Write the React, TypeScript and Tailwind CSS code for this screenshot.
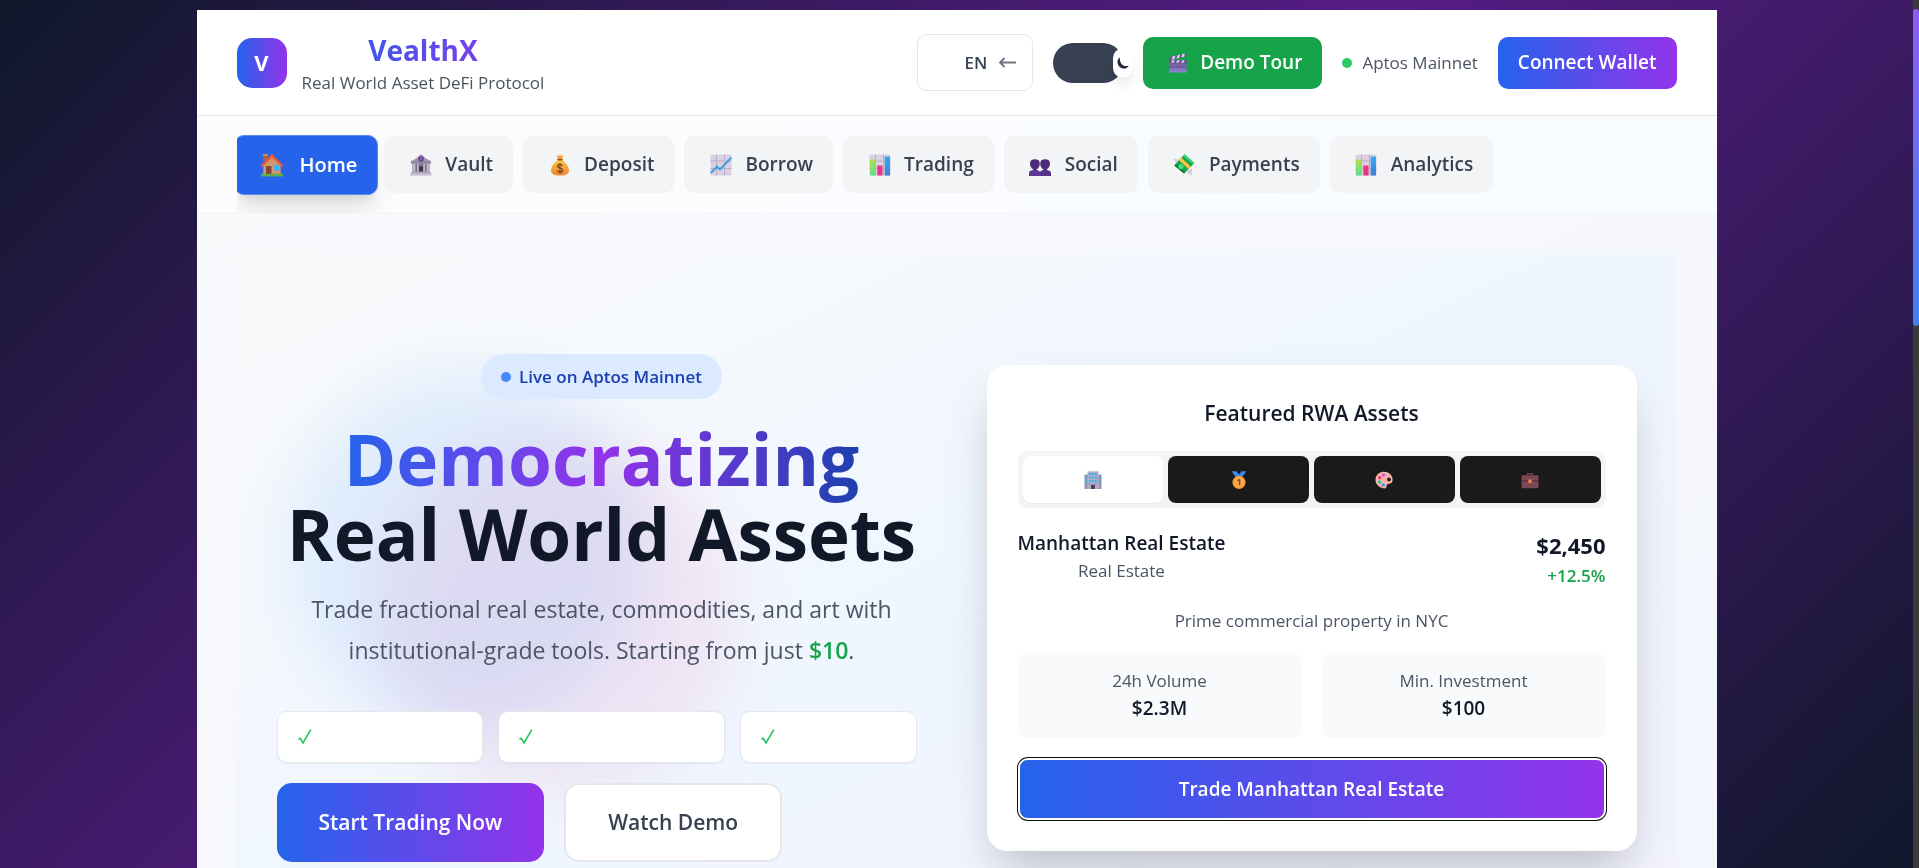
import React from "react";

type IconProps = { className?: string };

const House = ({ className }: IconProps) => (
  <svg viewBox="0 0 22 22" className={className} aria-hidden="true">
    <path d="M3 1h4v6H3z" fill="#b5603f" />
    <path d="M2.5 1h5v1.6h-5z" fill="#d98a5e" />
    <path d="M3 11 11 3l8 8v9H3z" fill="#cf9670" />
    <path d="M0.5 11.5 11 1l10.500 10.500-1.500 1.300L11 4 2 12.800z" fill="#f0562f" />
    <path d="M5.500 12h5v8h-5z" fill="#7d4533" />
    <path d="M13 11h5v5h-5z" fill="#35b4f4" />
    <path d="M1 19h20v2.500H1z" fill="#5fae4b" />
  </svg>
);

const Bank = ({ className }: IconProps) => (
  <svg viewBox="0 0 22 22" className={className} aria-hidden="true">
    <path d="M1 7 6 4.500 11 .3l5 4.200L21 7v2.500H1z" fill="#a196ae" />
    <path d="M1 7.500h20V9.500H1z" fill="#8d829c" />
    <circle cx="11" cy="5" r="2.700" fill="#5b3a8f" />
    <path d="M11 3.500v3" stroke="#b58be0" strokeWidth="1.200" />
    <path d="M2.500 9.500h17V18h-17z" fill="#7d7189" />
    <path d="M3 9.500h2.500V18H3zM7 9.500h1.800V18H7zM13.200 9.500H15V18h-1.800zM16.500 9.500H19V18h-2.500z" fill="#bdb4c8" />
    <path d="M9 12.500h4V18H9z" fill="#42374f" />
    <path d="M1.500 17.500h19V19h-19z" fill="#a99fb6" />
    <path d="M0.500 19h21v2.500h-21z" fill="#c4bccf" />
  </svg>
);

const MoneyBag = ({ className }: IconProps) => (
  <svg viewBox="0 0 22 22" className={className} aria-hidden="true">
    <defs>
      <linearGradient id="bag" x1="0" y1="0" x2="0" y2="1">
        <stop offset="0" stopColor="#fcc945" />
        <stop offset="1" stopColor="#f0832c" />
      </linearGradient>
    </defs>
    <path d="M7.500 1.800 9.500 2l1.500-1.700L12.500 2l2-.2-1.700 3.400H9.200z" fill="#f6a732" />
    <path d="M9 6c-3.500 2.500-7 6-7 10.500 0 3.500 3 5 9 5s9-1.500 9-5C20 12 16.500 8.500 13 6z" fill="url(#bag)" />
    <rect x="8.200" y="4.800" width="5.600" height="1.700" rx=".8" fill="#a25a2c" />
    <path d="M13.600 11.600c-.5-1-1.500-1.300-2.600-1.300-1.500 0-2.500.7-2.500 1.900 0 2.800 5.200 1.200 5.200 4 0 1.200-1.200 2-2.700 2s-2.500-.6-2.900-1.700M11 8.900v10.800" fill="none" stroke="#7a4322" strokeWidth="1.300" />
  </svg>
);

const ChartBase = () => (
  <>
    <rect x="0.500" y="0.500" width="21" height="21" rx="1.500" fill="#d9d1e2" />
    <path d="M6.500 .5v21M14.500 .5v21M.5 7h21M.5 14.500h21" stroke="#b9afc6" strokeWidth="1" />
  </>
);

const ChartUp = ({ className }: IconProps) => (
  <svg viewBox="0 0 22 22" className={className} aria-hidden="true">
    <ChartBase />
    <path d="m.8 19 6.200-6.500 3 3L21.500 3.500" fill="none" stroke="#3b9be6" strokeWidth="1.900" />
  </svg>
);

const BarChart = ({ className }: IconProps) => (
  <svg viewBox="0 0 22 22" className={className} aria-hidden="true">
    <defs>
      <linearGradient id="barGreen" x1="0" y1="0" x2="0" y2="1">
        <stop offset="0" stopColor="#b4e04c" />
        <stop offset="1" stopColor="#5fdd8c" />
      </linearGradient>
      <linearGradient id="barBlue" x1="0" y1="0" x2="0" y2="1">
        <stop offset="0" stopColor="#37a8f8" />
        <stop offset="1" stopColor="#3f7fd0" />
      </linearGradient>
    </defs>
    <ChartBase />
    <path d="M1 5.500h5.200v16H1z" fill="url(#barGreen)" />
    <path d="M8.300 11.500h5.200v10H8.300z" fill="#ec3480" />
    <path d="M15.700 2.500h5.300v19h-5.300z" fill="url(#barBlue)" />
  </svg>
);

const People = ({ className }: IconProps) => (
  <svg viewBox="0 0 22 22" className={className} aria-hidden="true">
    <g fill="#4a2c78">
      <path d="M1 9.500C1 6.500 3 5.200 5.900 5.200s4.900 1.300 4.900 4.300-1.900 6-4.900 6S1 12.500 1 9.500z" />
      <path d="M11.200 9.500c0-3 2-4.300 4.900-4.300S21 6.500 21 9.500s-1.900 6-4.900 6-4.900-3-4.900-6z" />
      <path d="M4.200 14h3.400v3H4.200zM14.400 14h3.400v3h-3.400z" />
    </g>
    <path d="M0 22v-2.700c0-2 1.500-2.800 4-3.300h4c2 .4 3 1.200 3 3v3z" fill="#5c3892" />
    <path d="M11 22v-3c0-1.800 1-2.600 3-3h4c2.500.5 4 1.300 4 3.300V22z" fill="#553189" />
  </svg>
);

const FlyingMoney = ({ className }: IconProps) => (
  <svg viewBox="0 0 22 22" className={className} aria-hidden="true">
    <path d="M.3 4.500 9 6.500l-4 5zM13 17l6.500-3-.8 7.500c-2-.5-4-2-5.700-4.500z" fill="#d6d1de" />
    <path d="M11.500.3 21.500 9 11 19.500 1.300 11.500z" fill="#14a54c" />
    <path d="M11.500.3 21.500 9l-1.500 1.500L9.800 2z" fill="#3fd477" />
    <path d="m1.300 11.500 9.700 8 1.200-1.200-9.500-8.200z" fill="#0c7a36" />
    <circle cx="8" cy="12.500" r="2.600" fill="#4bdd83" />
    <path d="m5.800 5.900 2.400-2.300 9.600 9-2.500 2.500z" fill="#fbc53b" />
  </svg>
);

const Clapper = ({ className }: IconProps) => (
  <svg viewBox="0 0 22 22" className={className} aria-hidden="true">
    <defs>
      <linearGradient id="clap" x1="0" y1="0" x2="0" y2="1">
        <stop offset="0" stopColor="#6b4f86" />
        <stop offset="1" stopColor="#8c86d6" />
      </linearGradient>
    </defs>
    <path d="M1.500 4.500 19.500 .3l.8 3.200L2.300 7.800z" fill="#6f5296" />
    <path d="m5 3.700 3-.7-.8 3.600-3 .7zM10.300 2.400l3-.7-.8 3.600-3 .7zM15.600 1.200l3-.7-.8 3.600-3 .7z" fill="#d9d2ec" />
    <path d="M1.500 7.800h19v13.700h-19z" fill="url(#clap)" />
    <path d="M1.500 7.800h19V11h-19z" fill="#6a4c8e" />
    <path d="M4.500 8h3l-1.200 2.600h-3zM10 8h3l-1.200 2.600h-3zM15.500 8h3l-1.200 2.600h-3z" fill="#cfc6e6" />
    <path d="M1.500 15.500h19" stroke="#5f4a80" strokeWidth="1" />
  </svg>
);

const Building = ({ className }: IconProps) => (
  <svg viewBox="0 0 18 18" className={className} aria-hidden="true">
    <path d="M.5 3.500H5V18H.5zM13 3.500h4.500V18H13z" fill="#9d93ad" />
    <path d="M3.500.3h11V18h-11z" fill="#b6adc2" />
    <path d="M5.300 2h1.800v2H5.300zM8.100 2h1.800v2H8.100zM10.900 2h1.800v2h-1.800zM5.300 5.500h1.800v2H5.300zM8.100 5.500h1.800v2H8.100zM10.900 5.500h1.800v2h-1.800zM5.300 9h1.800v2H5.300zM8.100 9h1.800v2H8.100zM10.900 9h1.800v2h-1.800zM1.300 5.500h1.300V8H1.300zM1.300 10h1.300v2.500H1.300zM15.400 5.500h1.300V8h-1.300zM15.400 10h1.300v2.500h-1.300zM5.300 12.300h1.500v1.500H5.300zM11.200 12.300h1.500v1.500h-1.500z" fill="#27b1f5" />
    <path d="M7 13.800h4V18H7z" fill="#4b3d5c" />
  </svg>
);

const Medal = ({ className }: IconProps) => (
  <svg viewBox="0 0 18 18" className={className} aria-hidden="true">
    <path d="M1.500.3h5L9 3.500 11.500.3h5l-4.500 6H6z" fill="#3f86f2" />
    <circle cx="9" cy="11.300" r="6.600" fill="#f99a2c" />
    <circle cx="9" cy="11.300" r="5.200" fill="#fbab45" />
    <path d="M9.600 8.300v6M9.600 8.400 7.700 9.800" stroke="#7c4a35" strokeWidth="1.500" fill="none" />
  </svg>
);

const Palette = ({ className }: IconProps) => (
  <svg viewBox="0 0 18 18" className={className} aria-hidden="true">
    <path d="M8.500.8C13.500.6 17.500 4 17.600 8.500c.1 3-1.500 4-3.500 4.200-2 .2-2.600 1-2.500 2.200.2 1.600-.8 2.600-2.500 2.500C4.500 17 .6 13.500.5 9 .4 4.500 4 1 8.500.8z" fill="#fbb3a4" />
    <circle cx="14" cy="8.500" r="1.900" fill="#241a1a" />
    <circle cx="8.500" cy="4" r="1.700" fill="#c65af0" />
    <circle cx="4.700" cy="6.800" r="1.700" fill="#f0356d" />
    <circle cx="4.500" cy="11" r="1.700" fill="#25c3a6" />
    <circle cx="8.200" cy="14" r="1.700" fill="#2f9df5" />
  </svg>
);

const Briefcase = ({ className }: IconProps) => (
  <svg viewBox="0 0 18 18" className={className} aria-hidden="true">
    <path d="M6.500 4.500V2.800h5v1.700" fill="none" stroke="#6b3d49" strokeWidth="1.400" />
    <rect x=".5" y="4.200" width="17" height="13" rx="1.300" fill="#7b4856" />
    <path d="M.5 9.300h17v1.200H.5z" fill="#5a303d" />
    <path d="M7.400 8.500h3.200v3.600H7.400z" fill="#ef8a45" />
  </svg>
);

const Moon = ({ className }: IconProps) => (
  <svg viewBox="0 0 12 12" className={className} aria-hidden="true">
    <path d="M3 .5C.8 1.600.2 4 .6 6.200c.6 3.200 3.600 5.600 7 5.200 2-.2 3.400-1.200 4.100-2.700C8.800 9.500 6.600 9 5 7.400 3.200 5.600 2.600 3 3 .5z" fill="#1f2937" />
  </svg>
);

const ArrowLeft = ({ className }: IconProps) => (
  <svg viewBox="0 0 17 11" className={className} aria-hidden="true">
    <path d="M17 5.500H1.200M5.500 1 1 5.500 5.500 10" fill="none" stroke="#6b7280" strokeWidth="1.800" />
  </svg>
);

const Check = ({ className }: IconProps) => (
  <svg viewBox="0 0 14 16" className={className} aria-hidden="true">
    <path d="M.5 10.200 2.200 9.300 5 14 12.800.7" fill="none" stroke="#22c55e" strokeWidth="1.600" />
  </svg>
);

const navItems = [
  { label: "Vault", Icon: Bank },
  { label: "Deposit", Icon: MoneyBag },
  { label: "Borrow", Icon: ChartUp },
  { label: "Trading", Icon: BarChart },
  { label: "Social", Icon: People },
  { label: "Payments", Icon: FlyingMoney },
  { label: "Analytics", Icon: BarChart },
];

const tabs = [
  { label: "Real estate", Icon: Building, active: true },
  { label: "Commodities", Icon: Medal, active: false },
  { label: "Art", Icon: Palette, active: false },
  { label: "Business", Icon: Briefcase, active: false },
];

const stats = [
  { label: "24h Volume", value: "$2.3M" },
  { label: "Min. Investment", value: "$100" },
];

const features = ["w-[206px]", "w-[227px]", "w-[177px]"];

function Header() {
  return (
    <header className="flex items-center justify-between border-b border-[#e5e7eb] bg-white px-10 py-5">
      <div className="flex items-center gap-[15px]">
        <div className="flex h-[50px] w-[50px] items-center justify-center rounded-[15px] bg-linear-to-r/srgb from-[#2563eb] to-[#9333ea] text-[22px] font-bold text-white">
          V
        </div>
        <div className="text-center">
          <div className="bg-linear-to-r/srgb from-[#2563eb] to-[#9333ea] bg-clip-text text-[28px] leading-[40px] font-bold text-transparent">
            VealthX
          </div>
          <div className="text-[17px] leading-[25px] text-[#4b5563]">Real World Asset DeFi Protocol</div>
        </div>
      </div>
      <div className="flex items-center gap-5">
        <button className="flex h-[57px] w-[116px] items-center justify-end gap-3 rounded-[10px] border border-[#e5e7eb] bg-white pr-4 text-[17px] font-semibold text-[#374151]">
          EN
          <ArrowLeft className="h-[11px] w-[17px]" />
        </button>
        <button
          role="switch"
          aria-checked="true"
          aria-label="Dark mode"
          className="relative h-10 w-[70px] rounded-full bg-[#374151]"
        >
          <span className="absolute top-[5px] -right-[10px] flex h-[30px] w-5 items-center justify-center rounded-full bg-white shadow-lg">
            <Moon className="h-3 w-3" />
          </span>
        </button>
        <button className="flex h-[52px] items-center rounded-[10px] bg-[#16a34a] px-5 text-[19px] font-semibold text-white">
          <span className="mr-2 flex w-[29px] justify-center">
            <Clapper className="h-5 w-5" />
          </span>
          Demo Tour
        </button>
        <div className="flex items-center gap-[10px] text-[17px] text-[#4b5563]">
          <span className="h-[10px] w-[10px] rounded-full bg-[#2dca6a]" />
          Aptos Mainnet
        </div>
        <button className="h-[52px] rounded-[10px] bg-linear-to-r/srgb from-[#2563eb] to-[#9333ea] px-5 text-[19px] font-semibold text-white">
          Connect Wallet
        </button>
      </div>
    </header>
  );
}

function Nav() {
  return (
    <nav className="border-b border-[#f3f4f6] bg-linear-to-r from-[#fcfcfe] to-[#f8fcff] px-10">
      <div className="overflow-hidden py-5">
        <div className="flex h-[57px] items-center gap-[10px]">
          <a
            href="#home"
            className="-mr-1 -ml-[3px] flex h-[60px] items-center rounded-[10px] border border-[#5b8af0] bg-[#2563eb] px-5 text-[20px] font-semibold text-white shadow-xl"
          >
            <span className="mr-[10px] flex w-[35px] justify-center">
              <House className="h-6 w-6" />
            </span>
            Home
          </a>
          {navItems.map(({ label, Icon }) => (
            <a
              key={label}
              href={`#${label.toLowerCase()}`}
              className="flex h-[57px] items-center rounded-[10px] bg-[#f3f4f6] px-5 text-[19px] font-semibold text-[#374151]"
            >
              <span className="mr-2 flex w-[33px] justify-center">
                <Icon className="h-[22px] w-[22px]" />
              </span>
              {label}
            </a>
          ))}
        </div>
      </div>
    </nav>
  );
}

function HeroIntro() {
  return (
    <div className="relative">
      <div className="absolute top-[15px] left-[10px] h-[360px] w-[360px] rounded-full bg-[#e9f3fe] mix-blend-multiply blur-[30px]" />
      <div className="absolute top-20 left-[100px] h-[360px] w-[360px] rounded-full bg-[#fdedf5] mix-blend-multiply blur-[30px]" />
      <div className="relative">
        <div className="text-center">
          <div className="mx-auto flex h-[45px] w-fit items-center gap-2 rounded-full bg-[#dbeafe] px-5 text-[17px] font-semibold text-[#1e40af]">
            <span className="h-[10px] w-[10px] rounded-full bg-[#4488f7]" />
            Live on Aptos Mainnet
          </div>
          <h1 className="mt-[22px] text-[71px] leading-[75px] font-bold text-[#111827]">
            <span className="bg-linear-to-r/srgb from-[#2563eb] via-[#9333ea] to-[#1e40af] bg-clip-text text-transparent">
              Democratizing
            </span>
            <br />
            Real World Assets
          </h1>
          <p className="mx-auto mt-[18px] max-w-[610px] text-[23px] leading-[41px] text-[#4b5563]">
            Trade fractional real estate, commodities, and art with institutional-grade tools. Starting from just{" "}
            <span className="font-semibold text-[#16a34a]">$10</span>.
          </p>
        </div>
        <ul className="mt-10 flex gap-[15px]">
          {features.map((width) => (
            <li
              key={width}
              className={`${width} flex h-[52px] items-center rounded-[10px] border border-[#e5e7eb] bg-white px-5 shadow-xs`}
            >
              <Check className="h-4 w-[14px]" />
            </li>
          ))}
        </ul>
        <div className="mt-5 flex gap-5">
          <button className="h-[79px] rounded-[15px] bg-linear-to-r/srgb from-[#2563eb] to-[#9333ea] px-[42px] text-[21px] font-semibold text-white">
            Start Trading Now
          </button>
          <button className="h-[79px] rounded-[15px] border-2 border-[#e5e7eb] bg-white px-[42px] text-[21px] font-semibold text-[#374151]">
            Watch Demo
          </button>
        </div>
      </div>
    </div>
  );
}

function AssetCard() {
  return (
    <section className="rounded-[20px] border border-white bg-white p-[30px] text-center text-[#111827] shadow-2xl">
      <h2 className="text-[21px] leading-[35px] font-semibold">Featured RWA Assets</h2>
      <div role="tablist" className="mt-5 grid grid-cols-4 gap-[5px] rounded-[10px] bg-[#f3f4f6] p-[5px]">
        {tabs.map(({ label, Icon, active }) => (
          <button
            key={label}
            role="tab"
            aria-label={label}
            aria-selected={active}
            className={`flex h-[47px] items-center justify-center rounded-[8px] ${
              active ? "bg-white shadow-xs" : "bg-[#1a1a1a]"
            }`}
          >
            <Icon className="h-[18px] w-[18px]" />
          </button>
        ))}
      </div>
      <div className="mt-5 flex justify-between">
        <div>
          <h3 className="text-[19px] leading-[30px] font-semibold">Manhattan Real Estate</h3>
          <p className="text-[17px] leading-[25px] text-[#4b5563]">Real Estate</p>
        </div>
        <div className="text-right">
          <p className="text-[22px] leading-[35px] font-bold">$2,450</p>
          <p className="text-[17px] leading-[25px] font-semibold text-[#16a34a]">+12.5%</p>
        </div>
      </div>
      <p className="mt-5 text-[17px] leading-[25px] text-[#4b5563]">Prime commercial property in NYC</p>
      <div className="mt-5 grid grid-cols-2 gap-5">
        {stats.map(({ label, value }) => (
          <div key={label} className="rounded-[10px] bg-[#f9fafb] p-[15px]">
            <p className="text-[17px] leading-[25px] text-[#4b5563]">{label}</p>
            <p className="text-[19px] leading-[30px] font-semibold">{value}</p>
          </div>
        ))}
      </div>
      <div className="mt-5 p-[2px]">
        <button className="h-[58px] w-full rounded-[8px] bg-linear-to-r/srgb from-[#2563eb] to-[#9333ea] text-[19px] font-semibold text-white shadow-[0_0_0_2px_#ffffff,0_0_0_3px_#101010]">
          Trade Manhattan Real Estate
        </button>
      </div>
    </section>
  );
}

export default function App() {
  return (
    <div className="flex h-screen overflow-hidden bg-[#3a3a3a] font-['Open_Sans','Noto_Sans',sans-serif]">
      <div className="h-full min-w-0 flex-1 overflow-hidden bg-[linear-gradient(135deg,#0f172a_0%,#581c87_50%,#0f172a_100%)] pt-[10px]">
        <div className="mx-auto max-w-[1520px] bg-white">
          <Header />
          <Nav />
          <main className="bg-linear-to-br/srgb from-[#f9fafc] to-[#f3f5fe] p-10">
            <div className="grid grid-cols-2 items-center gap-[60px] bg-linear-to-br/srgb from-[#fafafb] via-[#eff6ff] to-[#f3f3ff] px-10 py-[100px]">
              <HeroIntro />
              <AssetCard />
            </div>
          </main>
        </div>
      </div>
      <div className="w-[6px] shrink-0 pt-[9px]" aria-hidden="true">
        <div className="h-[317px] rounded-full bg-linear-to-b/srgb from-[#8b5cf6] to-[#3b82f6]" />
      </div>
    </div>
  );
}
